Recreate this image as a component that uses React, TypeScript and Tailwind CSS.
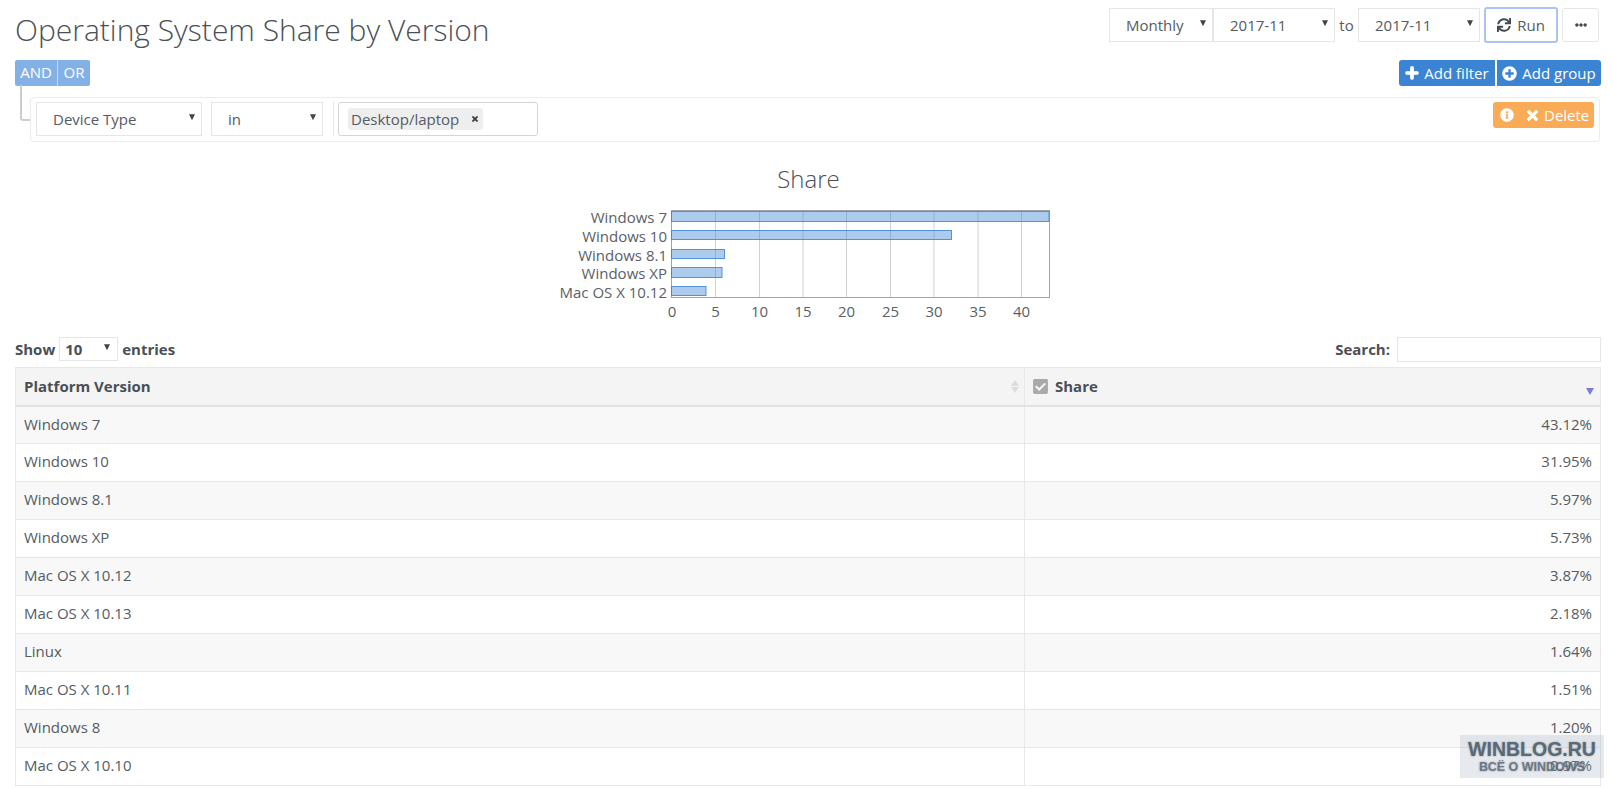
import React from "react";
import { FaSync, FaEllipsisH, FaPlus, FaPlusCircle, FaInfoCircle, FaTimes, FaCheckSquare } from "react-icons/fa";

const rows: [string, string][] = [
  ["Windows 7", "43.12%"],
  ["Windows 10", "31.95%"],
  ["Windows 8.1", "5.97%"],
  ["Windows XP", "5.73%"],
  ["Mac OS X 10.12", "3.87%"],
  ["Mac OS X 10.13", "2.18%"],
  ["Linux", "1.64%"],
  ["Mac OS X 10.11", "1.51%"],
  ["Windows 8", "1.20%"],
  ["Mac OS X 10.10", "0.97%"],
];

function Caret({ className = "" }: { className?: string }) {
  return <span className={"absolute top-1/2 -translate-y-[80%] border-x-[3.5px] border-t-[6px] border-x-transparent border-t-[#444] " + className} />;
}

function Sel({ w, label }: { w: string; label: string }) {
  return (
    <div className={`relative flex items-center shrink-0 h-[34px] pl-[16px] bg-white border border-[#e6e6e6] text-[15px] text-[#555b63] ${w}`}>
      {label}
      <Caret className="right-[6px]" />
    </div>
  );
}

function Chart() {
  const labels: [string, number, number, number][] = [
    ["Windows 7", 212, 10, 1049],
    ["Windows 10", 231, 9, 951.5],
    ["Windows 8.1", 250, 9, 724.5],
    ["Windows XP", 268, 10, 722],
    ["Mac OS X 10.12", 287, 9, 706],
  ];
  const ticks: [number, number][] = [[0, 672], [5, 715.5], [10, 759.5], [15, 803], [20, 846.5], [25, 890.5], [30, 934], [35, 978], [40, 1021.5]];
  return (
    <svg width="540" height="130" viewBox="540 198 540 130" className="block" style={{ fontFamily: "'Open Sans', sans-serif" }}>
      {ticks.slice(1).map(([, x]) => (
        <line key={x} x1={x} x2={x} y1="211" y2="298" stroke="#cfd1d4" />
      ))}
      <rect x="671.5" y="211.5" width="378" height="87" fill="none" stroke="#a0a4aa" />
      {labels.map(([t, y, h, x2]) => (
        <g key={t}>
          <rect x="671.5" y={y + 0.5} width={x2 - 671.5} height={h} fill="#3b84d4" fillOpacity="0.42" stroke="#3b84d4" strokeOpacity="0.85" />
          <text x="667" y={y + 11.5} textAnchor="end" fontSize="15" fill="#5a6068">{t}</text>
        </g>
      ))}
      {ticks.map(([v, x]) => (
        <text key={v} x={x} y="318" textAnchor="middle" fontSize="15" fill="#5a6068">{v}</text>
      ))}
    </svg>
  );
}

export default function App() {
  return (
    <div className="relative h-[789px] overflow-hidden bg-white pl-[15px] pr-[13px] text-[15px] text-[#555b63]" style={{ fontFamily: "'Open Sans', sans-serif" }}>
      {/* Header */}
      <div className="flex justify-between h-[60px]">
        <h1 className="text-[30px] font-light leading-[40px] mt-[10px] text-[#4a5058]">Operating System Share by Version</h1>
        <div className="flex items-start pt-[8px] pr-[2px]">
          <Sel w="w-[104px]" label="Monthly" />
          <Sel w="w-[122px]" label="2017-11" />
          <span className="w-[23px] text-center leading-[34px]">to</span>
          <Sel w="w-[122px]" label="2017-11" />
          <button className="flex items-center justify-center gap-[6px] w-[74px] h-[36px] -mt-[1px] ml-[4px] bg-white border-2 border-[#a9c5f0] rounded-[3px] text-[15px] text-[#555b63]">
            <FaSync className="text-[14px] text-[#444a50]" /> Run
          </button>
          <button className="flex items-center justify-center w-[37px] h-[34px] ml-[4px] bg-white border border-[#e6e6e6] rounded-[3px]">
            <FaEllipsisH className="text-[12px] text-[#444a50]" />
          </button>
        </div>
      </div>

      {/* Query builder */}
      <div className="relative">
        <div className="flex justify-between h-[37px]">
          <div className="flex h-[26px] rounded-[2px] overflow-hidden bg-[#84b1e5] text-white leading-[25px]">
            <span className="w-[43px] text-center border-r border-[#c6d9f0] font-medium">AND</span>
            <span className="w-[32px] text-center font-medium">OR</span>
          </div>
          <div className="flex h-[26px] gap-[2px] text-white">
            <button className="flex items-center justify-center gap-[5px] w-[96px] bg-[#3b84d4] rounded-l-[3px]"><FaPlus className="text-[14px] stroke-current stroke-[40]" /> Add filter</button>
            <button className="flex items-center justify-center gap-[5px] w-[104px] bg-[#3b84d4] rounded-r-[3px]"><FaPlusCircle className="text-[15px]" /> Add group</button>
          </div>
        </div>
        <div className="absolute left-[5px] top-[25px] w-[10px] h-[36px] border-l-2 border-b-2 border-[#cccccc] rounded-bl-[3px]" />
        <div className="flex justify-between ml-[15px] mr-[1px] h-[45px] border border-[#ececec] rounded-[4px] pt-[4px] pl-[5px] pr-[5px]">
          <div className="flex items-start">
            <Sel w="w-[166px]" label="Device Type" />
            <Sel w="w-[112px] ml-[9px]" label="in" />
            <div className="w-px h-[34px] bg-[#e6e6e6] ml-[10px]" />
            <div className="flex items-center w-[200px] h-[34px] ml-[4px] border border-[#d5d5d5] rounded-[3px] pl-[9px]">
              <span className="flex items-center h-[22px] w-[135px] bg-[#eeeeee] rounded-[3px] pl-[3px] text-[#555b63]">
                Desktop/laptop
                <FaTimes className="text-[8px] ml-[12px] text-[#444] stroke-current stroke-[40]" />
              </span>
            </div>
          </div>
          <button className="flex items-center w-[101px] h-[26px] bg-[#f9ab57] rounded-[3px] text-white pl-[7px]">
            <FaInfoCircle className="text-[14px]" />
            <FaTimes className="text-[15px] ml-[11px] mr-[4px] stroke-current stroke-[30]" /> Delete
          </button>
        </div>
      </div>

      {/* Chart */}
      <div className="h-[195px]">
        <div className="text-[24px] font-light leading-[32px] pt-[21px] h-[54px] text-center ml-[1px] text-[#4a5058]">Share</div>
        <div className="ml-[525px] mt-[1px]"><Chart /></div>
      </div>

      {/* Table controls */}
      <div className="flex justify-between items-center h-[24px] font-bold text-[#4a4f56]">
        <div className="flex items-center">
          Show
          <div className="relative flex items-center w-[59px] h-[24px] ml-[4px] mr-[4px] border border-[#e6e6e6] pl-[5px]">
            10
            <Caret className="right-[7px]" />
          </div>
          entries
        </div>
        <div className="flex items-center gap-[7px]">
          Search:
          <div className="w-[204px] h-[25px] border border-[#e6e6e6] bg-white" />
        </div>
      </div>

      {/* Table */}
      <table className="mt-[6px] w-full table-fixed border-collapse text-[15px]">
        <colgroup>
          <col className="w-[1009px]" />
          <col />
        </colgroup>
        <thead>
          <tr className="h-[38px] bg-[#f4f4f4] text-[#4a4f56]">
            <th className="relative border border-[#e8e8e8] border-b-2 border-b-[#e2e2e2] pl-[8px] text-left font-bold">
              Platform Version
              <span className="absolute right-[5px] top-[12px] flex flex-col gap-[1px]">
                <span className="border-x-[4px] border-b-[6px] border-x-transparent border-b-[#dcdcdc]" />
                <span className="border-x-[4px] border-t-[6px] border-x-transparent border-t-[#dcdcdc]" />
              </span>
            </th>
            <th className="relative border border-[#e8e8e8] border-b-2 border-b-[#e2e2e2] pl-[7px] text-left font-bold">
              <span className="flex items-center gap-[6px]">
                <FaCheckSquare className="text-[17px] text-[#a9a9a9]" /> Share
              </span>
              <span className="absolute right-[6px] top-[20px] border-x-[4px] border-t-[7px] border-x-transparent border-t-[#7b7bdc]" />
            </th>
          </tr>
        </thead>
        <tbody>
          {rows.map(([a, b], i) => (
            <tr key={a} className={"h-[38px] " + (i % 2 === 0 ? "bg-[#f8f8f8]" : "bg-white")}>
              <td className="border border-[#e8e8e8] pl-[8px] pb-[2px]">{a}</td>
              <td className="border border-[#e8e8e8] pr-[8px] pb-[2px] text-right">{b}</td>
            </tr>
          ))}
        </tbody>
      </table>

      {/* Watermark */}
      <div className="absolute left-[1460px] top-[735px] w-[144px] h-[43px] bg-[#9aa8b8]/25 flex flex-col items-center justify-center leading-none [text-shadow:0_0_2px_#5b687599]" style={{ fontFamily: "'Liberation Sans', sans-serif" }}>
        <div className="text-[19.5px] font-bold text-[#5b6875] leading-[21px]">WINBLOG.RU</div>
        <div className="text-[12.5px] font-bold text-[#5b6875]/80 leading-[15px]">ВСЁ О WINDOWS</div>
      </div>
    </div>
  );
}
